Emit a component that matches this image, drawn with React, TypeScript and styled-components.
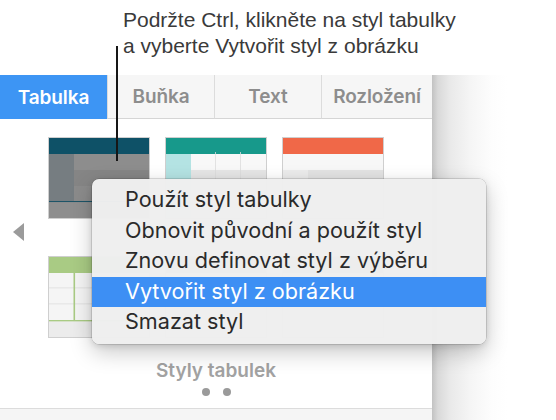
import React from "react";
import styled, { createGlobalStyle } from "styled-components";

const Global = createGlobalStyle`
  html, body { margin: 0; padding: 0; background: #ffffff; }
  body { width: 556px; height: 420px; overflow: hidden; }
  * { box-sizing: border-box; }
`;

const Stage = styled.div`
  position: relative;
  width: 556px;
  height: 420px;
  display: flex;
  flex-direction: column;
  background: #ffffff;
  overflow: hidden;
`;

const Callout = styled.div`
  height: 75px;
  padding: 7px 0 0 123px;
  font-family: "Liberation Sans", Arial, sans-serif;
  font-size: 21px;
  line-height: 26px;
  color: #3a3a3a;
`;

const CalloutLine = styled.div`
  white-space: nowrap;
`;

const PointerLine = styled.div`
  position: absolute;
  left: 116px;
  top: 46px;
  width: 1.6px;
  height: 115px;
  background: #161616;
`;

const Workspace = styled.div`
  flex: 1;
  display: flex;
`;

const Panel = styled.div`
  width: 432px;
  display: flex;
  flex-direction: column;
  background: #ffffff;
`;

const EdgeShade = styled.div`
  flex: 1;
  background: linear-gradient(
    to right,
    #c2c2c2 0px,
    #d9d9d9 6px,
    #e9e9e9 18px,
    #f5f5f5 38px,
    #fdfdfd 60px,
    #ffffff 75px
  );
`;

const TabBar = styled.div`
  display: flex;
  height: 44px;
`;

const Tab = styled.div<{ $active?: boolean; $w: number }>`
  width: ${(p) => p.$w}px;
  height: 44px;
  display: flex;
  align-items: center;
  justify-content: center;
  font-family: Inter, "Liberation Sans", sans-serif;
  font-weight: 600;
  font-size: 19px;
  letter-spacing: -0.1px;
  color: ${(p) => (p.$active ? "#ffffff" : "#8d8d8d")};
  background: ${(p) => (p.$active ? "#3d95f4" : "#f6f6f6")};
  border-bottom: ${(p) => (p.$active ? "none" : "1px solid #d5d5d5")};
  border-left: ${(p) => (p.$active ? "none" : "1px solid #dcdcdc")};
`;

const Styles = styled.div`
  display: flex;
  margin-top: 18px;
`;

const ArrowCol = styled.div`
  width: 48px;
  padding: 86px 0 0 13px;
`;

const LeftArrow = styled.div`
  width: 0;
  height: 0;
  border-top: 9.5px solid transparent;
  border-bottom: 9.5px solid transparent;
  border-right: 11px solid #9b9b9b;
`;

const ThumbGrid = styled.div`
  display: grid;
  grid-template-columns: repeat(3, 102px);
  grid-template-rows: 82px 81px;
  column-gap: 15px;
  row-gap: 37px;
`;

const Thumb = styled.svg`
  display: block;
  width: 102px;
  height: 82px;
`;

const SectionTitle = styled.div`
  margin-top: 23px;
  text-align: center;
  font-family: Inter, "Liberation Sans", sans-serif;
  font-weight: 600;
  font-size: 19px;
  line-height: 22px;
  color: #a2a2a2;
`;

const Dots = styled.div`
  margin-top: 6px;
  display: flex;
  justify-content: center;
  gap: 13px;
  padding-left: 1px;
`;

const Dot = styled.span`
  width: 8px;
  height: 8px;
  border-radius: 50%;
  background: #9a9a9a;
`;

const Footer = styled.div`
  flex: 1;
  margin-top: 12px;
  border-top: 1px solid #dcdcdc;
  background: #f5f5f5;
`;

const Menu = styled.div`
  position: absolute;
  left: 92px;
  top: 179px;
  width: 394px;
  height: 165px;
  padding: 6px 0;
  border-radius: 7px;
  background: rgba(239, 239, 239, 0.98);
  box-shadow: 0 0 0 0.5px rgba(0, 0, 0, 0.22), 0 8px 22px rgba(0, 0, 0, 0.22),
    0 2px 6px rgba(0, 0, 0, 0.12);
  font-family: Inter, "Liberation Sans", sans-serif;
`;

const MenuItem = styled.div<{ $hl?: boolean }>`
  height: 30.6px;
  padding-left: 33px;
  font-size: 21.6px;
  line-height: 29px;
  letter-spacing: 0px;
  white-space: nowrap;
  color: ${(p) => (p.$hl ? "#ffffff" : "#2a2a2a")};
  background: ${(p) => (p.$hl ? "#3d8ff4" : "transparent")};
`;

const Frame = () => <rect x="0" y="0" width="102" height="82" fill="#cfcfcf" />;

const DarkThumb = () => (
  <Thumb viewBox="0 0 102 82">
    <Frame />
    <rect x="1" y="1" width="100" height="80" fill="#8b8b8b" />
    <rect x="1" y="1" width="100" height="16" fill="#0e5167" />
    <rect x="1" y="17" width="100" height="16" fill="#8d8d8d" />
    <rect x="1" y="33" width="100" height="16" fill="#858585" />
    <rect x="1" y="49" width="100" height="15" fill="#8b8b8b" />
    <rect x="1" y="17" width="25" height="47" fill="#767d81" />
    <rect x="1" y="64" width="100" height="1.2" fill="#1d5467" />
    <rect x="1" y="65.2" width="100" height="15.8" fill="#8e8e8e" />
  </Thumb>
);

const TealThumb = () => (
  <Thumb viewBox="0 0 102 82">
    <Frame />
    <rect x="1" y="1" width="100" height="80" fill="#f8f8f8" />
    <rect x="1" y="1" width="100" height="16" fill="#17998b" />
    <rect x="26" y="33" width="75" height="16" fill="#e6e6e6" />
    <rect x="26" y="65" width="75" height="16" fill="#e6e6e6" />
    <rect x="1" y="17" width="25" height="64" fill="#b4e3e3" />
    <rect x="50" y="15" width="0.8" height="66" fill="#dcdcdc" />
    <rect x="75" y="15" width="0.8" height="66" fill="#dcdcdc" />
  </Thumb>
);

const OrangeThumb = () => (
  <Thumb viewBox="0 0 102 82">
    <Frame />
    <rect x="1" y="1" width="100" height="80" fill="#f7f7f7" />
    <rect x="1" y="1" width="100" height="16" fill="#f06848" />
    <rect x="1" y="33" width="100" height="16" fill="#e3e3e3" />
    <rect x="1" y="33" width="25" height="16" fill="#ececec" />
    <rect x="1" y="65" width="100" height="16" fill="#e3e3e3" />
  </Thumb>
);

const GreenThumb = () => (
  <Thumb viewBox="0 0 102 82">
    <Frame />
    <rect x="1" y="1" width="100" height="80" fill="#f5f5f5" />
    <rect x="1" y="1" width="100" height="16" fill="#a9cb84" />
    <rect x="1" y="31.5" width="100" height="0.8" fill="#dddddd" />
    <rect x="1" y="47.5" width="100" height="0.8" fill="#dddddd" />
    <rect x="51" y="17" width="0.8" height="47" fill="#dddddd" />
    <rect x="76" y="17" width="0.8" height="47" fill="#dddddd" />
    <rect x="25.5" y="17" width="1.6" height="47" fill="#a9cb84" />
    <rect x="1" y="64" width="100" height="1.6" fill="#a9cb84" />
    <rect x="1" y="65.6" width="100" height="15.4" fill="#ececec" />
  </Thumb>
);

const PlainThumb = () => (
  <Thumb viewBox="0 0 102 82">
    <Frame />
    <rect x="1" y="1" width="100" height="80" fill="#f7f7f7" />
    <rect x="1" y="1" width="100" height="16" fill="#9a9a9a" />
  </Thumb>
);

const tabs = [
  { label: "Tabulka", active: true, w: 107 },
  { label: "Buňka", w: 107 },
  { label: "Text", w: 107 },
  { label: "Rozložení", w: 111 },
];

const menuItems = [
  "Použít styl tabulky",
  "Obnovit původní a použít styl",
  "Znovu definovat styl z výběru",
  "Vytvořit styl z obrázku",
  "Smazat styl",
];

export default function App() {
  return (
    <>
      <Global />
      <Stage>
        <Callout>
          <CalloutLine>Podržte Ctrl, klikněte na styl tabulky</CalloutLine>
          <CalloutLine>a vyberte Vytvořit styl z obrázku</CalloutLine>
        </Callout>
        <Workspace>
          <Panel>
            <TabBar>
              {tabs.map((t) => (
                <Tab key={t.label} $active={t.active} $w={t.w}>
                  {t.label}
                </Tab>
              ))}
            </TabBar>
            <Styles>
              <ArrowCol>
                <LeftArrow />
              </ArrowCol>
              <ThumbGrid>
                <DarkThumb />
                <TealThumb />
                <OrangeThumb />
                <GreenThumb />
                <PlainThumb />
                <PlainThumb />
              </ThumbGrid>
            </Styles>
            <SectionTitle>Styly tabulek</SectionTitle>
            <Dots>
              <Dot />
              <Dot />
            </Dots>
            <Footer />
          </Panel>
          <EdgeShade />
        </Workspace>
        <PointerLine />
        <Menu>
          {menuItems.map((m) => (
            <MenuItem key={m} $hl={m === "Vytvořit styl z obrázku"}>
              {m}
            </MenuItem>
          ))}
        </Menu>
      </Stage>
    </>
  );
}
